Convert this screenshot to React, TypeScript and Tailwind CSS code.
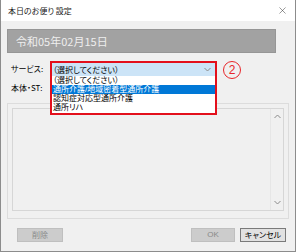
import { X } from 'lucide-react'

const items = ['（選択してください）', '通所介護/地域密着型通所介護', '認知症対応型通所介護', '通所リハ']

function Chevron({ up = false }: { up?: boolean }) {
    return (
        <svg width="7" height="5" viewBox="0 0 7 5" className="shrink-0">
            <polyline
                points={up ? '0.5,4 3.5,1 6.5,4' : '0.5,1 3.5,4 6.5,1'}
                fill="none"
                stroke="#8a8a8a"
                strokeWidth="1"
            />
        </svg>
    )
}

export default function App() {
    return (
        <div className="w-[296px] h-[252px] bg-[#f0f0f0] border-x border-b border-[#8c8c8c] flex flex-col text-[8px] text-black font-['Noto_Sans_CJK_JP',sans-serif] [font-feature-settings:'palt'] overflow-hidden">
            {/* title bar */}
            <div className="h-[21px] shrink-0 bg-white flex items-center justify-between pl-[7px] pr-[7px]">
                <span className="text-[8px] text-[#1a1a1a]">本日のお便り 設定</span>
                <X size={11} strokeWidth={1.1} className="text-[#333]" />
            </div>

            <div className="flex flex-col px-[6px]">
                {/* date banner */}
                <div className="mt-[8px] h-[24px] w-[269px] bg-[#a2a2a2] border border-[#969696] flex items-center pl-[8px] text-[11px] text-[#eeeeee]">
                    令和05年02月15日
                </div>

                {/* service row */}
                <div className="mt-[8px] h-[15px] flex items-center relative z-10">
                    <span className="w-[43px] pl-[4px] shrink-0">サービス:</span>
                    <div className="relative w-[167px] h-[15px] shrink-0">
                        <div className="h-full border-2 border-b-0 border-[#e3101c] bg-[#cce4f7] flex items-center justify-between pl-[1px] pr-[4px]">
                            <span>（選択してください）</span>
                            <Chevron />
                        </div>
                        <div className="absolute left-0 top-[15px] w-full bg-white border-2 border-t-0 border-[#e3101c] flex flex-col pb-[1px] font-['Liberation_Sans','Noto_Sans_CJK_JP',sans-serif]">
                            {items.map((item, i) => (
                                <div
                                    key={item}
                                    className={`h-[9px] leading-[9px] overflow-hidden pl-[1px] whitespace-nowrap ${i === 1 ? 'bg-[#0078d7] text-white' : ''}`}
                                >
                                    {item}
                                </div>
                            ))}
                        </div>
                    </div>
                    <div className="ml-[6px] mt-[2px] w-[18px] h-[18px] rounded-full border-[1.5px] border-[#e8262a] text-[#e8262a] text-[12px] leading-none flex items-center justify-center font-['Liberation_Sans',sans-serif]">
                        2
                    </div>
                </div>

                {/* body ST row */}
                <div className="mt-[5px] h-[14px] flex items-center pl-[4px]">
                    <span>本体・ST:</span>
                </div>

                {/* group box */}
                <div className="mt-[8px] h-[116px] border border-[#dcdcdc] flex flex-col px-[4px] pt-[4px] pb-[7px]">
                    <div className="flex-1 border border-[#d6d6d6] bg-[#f0f0f0] flex justify-end">
                        <div className="w-[13px] flex flex-col items-center justify-between py-[5px] border-l border-[#e6e6e6]">
                            <Chevron up />
                            <Chevron />
                        </div>
                    </div>
                </div>

                {/* buttons */}
                <div className="mt-[9px] h-[14px] flex items-stretch pl-[10px] pr-[3px]">
                    <button className="w-[46px] bg-[#cccccc] border border-[#bfbfbf] text-[#8a8a8a] text-[8px]">
                        削除
                    </button>
                    <div className="flex-1" />
                    <button className="w-[44px] bg-[#cccccc] border border-[#bfbfbf] text-[#8a8a8a] text-[8px] font-['Liberation_Sans',sans-serif]">
                        OK
                    </button>
                    <button className="ml-[5px] w-[46px] bg-[#e1e1e1] border border-[#7a7a7a] text-black text-[8px]">
                        キャンセル
                    </button>
                </div>
            </div>
        </div>
    )
}
